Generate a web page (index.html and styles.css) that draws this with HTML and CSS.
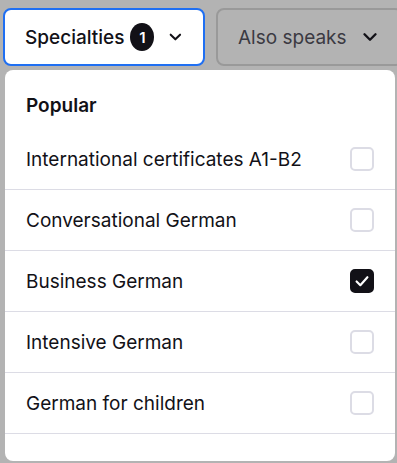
FILE: index.html
```html
<!DOCTYPE html>
<html lang="en">
<head>
    <meta charset="UTF-8">
    <meta name="viewport" content="width=device-width, initial-scale=1.0">
    <title>Filters</title>
    <link rel="stylesheet" href="styles.css">
</head>
<body>
    <div class="filters">
        <button class="filter active">
            Specialties <span class="count">1</span>
            <svg class="chevron" viewBox="0 0 24 24"><path d="M6 9l6 6 6-6"/></svg>
        </button>
        <button class="filter">
            Also speaks
            <svg class="chevron" viewBox="0 0 24 24"><path d="M6 9l6 6 6-6"/></svg>
        </button>
    </div>

    <div class="menu">
        <div class="menu-title">Popular</div>
        <label class="option">
            <span>International certificates A1-B2</span>
            <span class="box"></span>
        </label>
        <label class="option">
            <span>Conversational German</span>
            <span class="box"></span>
        </label>
        <label class="option">
            <span>Business German</span>
            <span class="box checked">
                <svg viewBox="0 0 24 24"><path d="M5.5 12.5l4.5 4.5 8.5-9.5"/></svg>
            </span>
        </label>
        <label class="option">
            <span>Intensive German</span>
            <span class="box"></span>
        </label>
        <label class="option">
            <span>German for children</span>
            <span class="box"></span>
        </label>
        <a class="more" href="#">Show all specialties</a>
    </div>
</body>
</html>
```

FILE: styles.css
```css
body {
    margin: 0;
    background-color: #b3b3b3;
    font-family: 'Inter', 'Noto Sans', sans-serif;
    color: #121117;
    height: 463px;
    overflow: hidden;
}
.filters {
    display: flex;
    gap: 11px;
    padding: 8px 9px 0 3px;
}
.filter {
    display: flex;
    align-items: center;
    gap: 10px;
    height: 58px;
    padding: 0 20px;
    border: 2px solid #999999;
    border-radius: 8px;
    background: transparent;
    font-family: inherit;
    font-size: 19px;
    color: #3b3a42;
    white-space: nowrap;
}
.filter.active {
    width: 202px;
    flex: none;
    padding: 0 18px 0 20px;
    background: #ffffff;
    border-color: #1f6ff2;
    color: #121117;
    font-weight: 500;
}
.filter:not(.active) {
    flex: 1;
    justify-content: center;
}
.count {
    display: inline-flex;
    align-items: center;
    justify-content: center;
    width: 28px;
    height: 28px;
    border-radius: 50%;
    background: #121117;
    color: #ffffff;
    font-size: 15px;
    font-weight: 600;
    margin-left: -4px;
}
.chevron {
    width: 22px;
    height: 22px;
    fill: none;
    stroke: #121117;
    stroke-width: 2.6;
    stroke-linecap: round;
    stroke-linejoin: round;
    margin-left: 2px;
}
.menu {
    margin: 4px 2px 0 5px;
    background: #ffffff;
    border-radius: 8px;
    height: 391px;
    overflow: hidden;
}
.menu-title {
    padding: 24px 21px 0;
    height: 95px;
    box-sizing: border-box;
    font-size: 19px;
    font-weight: 600;
}
.option {
    display: flex;
    align-items: center;
    justify-content: space-between;
    height: 60px;
    padding: 0 21px;
    border-bottom: 1px solid #dcdce5;
    font-size: 19px;
}
.option:first-of-type {
    margin-top: -36px;
}
.box {
    width: 20px;
    height: 20px;
    border: 2px solid #dcdce5;
    border-radius: 5px;
    display: flex;
    align-items: center;
    justify-content: center;
}
.box.checked {
    background: #121117;
    border-color: #121117;
}
.box svg {
    width: 20px;
    height: 20px;
    fill: none;
    stroke: #ffffff;
    stroke-width: 2.6;
    stroke-linecap: round;
    stroke-linejoin: round;
}
.more {
    display: block;
    padding: 25px 21px 0;
    font-size: 19px;
    color: #3c5ff0;
    text-decoration: none;
}
```
